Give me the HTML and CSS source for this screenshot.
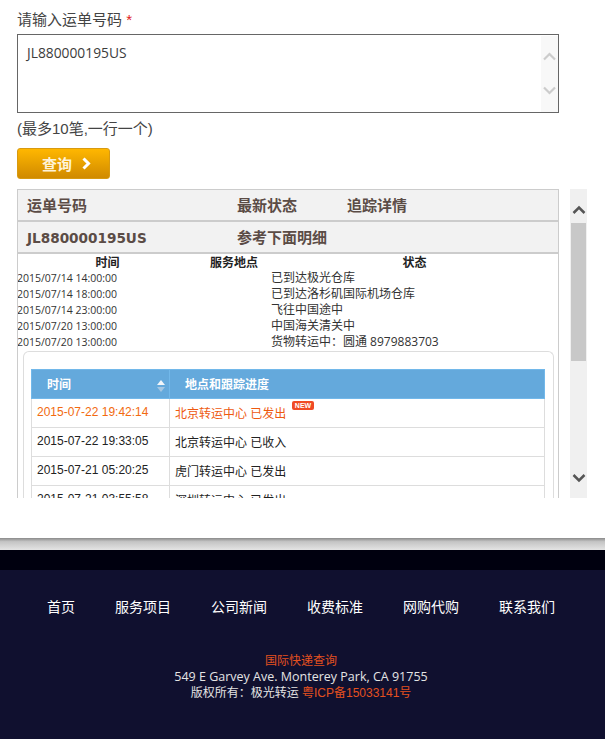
FILE: index.html
```html
<!DOCTYPE html>
<html lang="zh-CN">
<head>
<meta charset="utf-8">
<title>运单查询</title>
<link rel="stylesheet" href="styles.css">
</head>
<body>
<main class="main">
  <div class="field-label">请输入运单号码 <span class="req">*</span></div>
  <div class="input-box">
    <div class="input-text">JL880000195US</div>
    <div class="input-scroll">
      <svg class="chev-light" viewBox="0 0 13 10"><path d="M1 8.500 6.500 3 12 8.500"/></svg>
      <svg class="chev-light" viewBox="0 0 13 10"><path d="M1 1.500 6.500 7 12 1.500"/></svg>
    </div>
  </div>
  <div class="hint">(最多10笔,一行一个)</div>
  <button class="query-btn" type="button">查询
    <svg class="btn-chev" viewBox="0 0 9 13"><path d="M1.500 1.500 6.500 6.500 1.500 11.500"/></svg>
  </button>
  <div class="results">
    <section class="panel">
      <div class="bar bar-first">
        <div class="c1">运单号码</div><div class="c2">最新状态</div><div class="c3">追踪详情</div>
      </div>
      <div class="bar bar-second">
        <div class="c1 code">JL880000195US</div><div class="c2">参考下面明细</div>
      </div>
      <div class="log log-head"><div>时间</div><div>服务地点</div><div>状态</div></div>
      <div class="log"><div>2015/07/14 14:00:00</div><div></div><div>已到达极光仓库</div></div>
      <div class="log"><div>2015/07/14 18:00:00</div><div></div><div>已到达洛杉矶国际机场仓库</div></div>
      <div class="log"><div>2015/07/14 23:00:00</div><div></div><div>飞往中国途中</div></div>
      <div class="log"><div>2015/07/20 13:00:00</div><div></div><div>中国海关清关中</div></div>
      <div class="log"><div>2015/07/20 13:00:00</div><div></div><div>货物转运中：圆通 8979883703</div></div>
      <div class="card">
        <table class="track">
          <thead>
            <tr>
              <th class="th-time">时间
                <span class="sort"><i class="up"></i><i class="down"></i></span>
              </th>
              <th class="th-place">地点和跟踪进度</th>
            </tr>
          </thead>
          <tbody>
            <tr class="latest"><td>2015-07-22 19:42:14</td><td><span class="new-wrap">北京转运中心 已发出<span class="new">NEW</span></span></td></tr>
            <tr><td>2015-07-22 19:33:05</td><td>北京转运中心 已收入</td></tr>
            <tr><td>2015-07-21 05:20:25</td><td>虎门转运中心 已发出</td></tr>
            <tr><td>2015-07-21 03:55:58</td><td>深圳转运中心 已发出</td></tr>
          </tbody>
        </table>
      </div>
    </section>
    <div class="scrollbar">
      <svg class="chev-dark" viewBox="0 0 14 10"><path d="M1.500 8 7 2.500 12.500 8"/></svg>
      <div class="thumb"></div>
      <div class="track-space"></div>
      <svg class="chev-dark" viewBox="0 0 14 10"><path d="M1.500 2 7 7.500 12.500 2"/></svg>
    </div>
  </div>
</main>
<div class="shadow"></div>
<div class="black"></div>
<footer class="footer">
  <nav class="nav">
    <a>首页</a><a>服务项目</a><a>公司新闻</a><a>收费标准</a><a>网购代购</a><a>联系我们</a>
  </nav>
  <div class="info">
    <div class="accent">国际快递查询</div>
    <div class="addr">549 E Garvey Ave. Monterey Park, CA 91755</div>
    <div>版权所有：极光转运 <span class="accent">粤ICP备15033141号</span></div>
  </div>
</footer>
</body>
</html>
```
FILE: styles.css
```css
* { box-sizing: border-box; }
html, body { margin: 0; padding: 0; }
body {
  width: 605px;
  height: 739px;
  overflow: hidden;
  background: #fff;
  font-family: "Liberation Sans", "Noto Sans CJK SC", sans-serif;
  color: #333;
}
.main { height: 538px; padding: 11px 0 0 17px; background: #fff; }
.field-label { height: 23px; font-size: 15px; line-height: 18px; color: #444; }
.req { color: #e02020; }
.input-box {
  display: flex;
  width: 542px;
  height: 79px;
  border: 1px solid #666;
  background: #fff;
}
.input-text {
  flex: 1;
  padding: 9px 9px;
  font-family: "Open Sans", sans-serif;
  font-size: 13.800px;
  line-height: 18px;
  color: #3c3c3c;
}
.input-scroll {
  width: 17px;
  margin-top: 1px;
  padding: 15px 2px 0;
  background: #f8f8f8;
  display: flex;
  flex-direction: column;
  gap: 25px;
}
.chev-light { width: 13px; height: 10px; flex: none; fill: none; stroke: #ccc; stroke-width: 2.200; }
.hint { height: 35px; padding-top: 7px; font-size: 15px; line-height: 18px; color: #444; }
.query-btn {
  display: flex;
  align-items: center;
  width: 93px;
  height: 31px;
  padding: 0 0 0 24px;
  border: 1px solid #d89a10;
  border-radius: 3px;
  background: linear-gradient(#ffb700, #d08a00);
  color: #fff3d8;
  font-family: "Noto Sans CJK SC", sans-serif;
  font-size: 15px;
  font-weight: 700;
}
.btn-chev { width: 9px; height: 13px; margin-left: 10px; fill: none; stroke: #fff; stroke-width: 3; }
.results { display: flex; gap: 11px; margin-top: 10px; height: 309px; }
.panel {
  width: 542px;
  height: 309px;
  overflow: hidden;
  border: 1px solid #ccc;
  border-bottom: 0;
}
.bar {
  display: grid;
  grid-template-columns: 210px 110px 1fr;
  height: 32px;
  padding-left: 9px;
  align-items: center;
  background: #f2f2f2;
  border-bottom: 2px solid #ccc;
  font-family: "Noto Sans CJK SC", sans-serif;
  font-size: 15px;
  font-weight: 700;
  color: #5b4c46;
}
.bar-first { height: 32px; padding-bottom: 2px; }
.bar-second { padding-bottom: 1px; }
.code { padding-top: 3px; font-family: "DejaVu Sans", sans-serif; font-size: 13.600px; }
.log {
  display: grid;
  grid-template-columns: 181px 72px 1fr;
  height: 16px;
  margin-left: -1px;
  align-items: center;
  font-size: 12px;
  line-height: 16px;
  color: #333;
}
.log > div:first-child { font-family: "Open Sans", sans-serif; font-size: 10.500px; }
.log > div:last-child { padding: 1px 0 0 1px; font-family: "Open Sans", "Noto Sans CJK SC", sans-serif; }
.log-head { height: 15px; font-weight: 700; text-align: center; color: #222; font-family: "Noto Sans CJK SC", sans-serif; }
.log-head > div:first-child { font-family: inherit; font-size: 12px; }
.log-head > div:last-child { padding-top: 0; font-family: inherit; }
.card {
  width: 531px;
  height: 200px;
  margin: 2px 0 0 5px;
  padding: 17px 7px 0;
  border: 1px solid #ddd;
  border-bottom: 0;
  border-radius: 6px 6px 0 0;
}
.track { width: 514px; border-collapse: collapse; table-layout: fixed; font-size: 12px; }
.track th {
  height: 29px;
  padding-bottom: 2px;
  background: #64a9dc;
  border: 1px solid #72b8ea;
  color: #fff;
  font-family: "Noto Sans CJK SC", sans-serif;
  font-size: 12px;
  font-weight: 700;
  text-align: left;
}
.th-time { width: 138px; padding-left: 15px; position: relative; }
.th-place { padding-left: 15px; }
.sort { position: absolute; right: 4px; top: 10px; display: flex; flex-direction: column; gap: 2px; }
.up, .down { display: block; width: 0; height: 0; border-left: 4px solid transparent; border-right: 4px solid transparent; }
.up { border-bottom: 5px solid #f2f6fa; }
.down { border-top: 5px solid #a5c6e2; }
.track td {
  height: 29px;
  padding: 0 0 2px 5px;
  border: 1px solid #ddd;
  border-top: 0;
  color: #222;
  font-size: 12px;
  white-space: nowrap;
}
.latest td { color: #f26a10; }
.latest td:last-child { color: #ee5a10; }
.new-wrap { position: relative; display: inline-block; }
.new {
  position: absolute;
  left: 117px;
  top: -3px;
  width: 22px;
  height: 9px;
  background: #f04a24;
  border-radius: 2px;
  color: #fff;
  font-family: "Liberation Sans", sans-serif;
  font-size: 7px;
  font-weight: 700;
  line-height: 9px;
  text-align: center;
}
.scrollbar {
  display: flex;
  flex-direction: column;
  align-items: center;
  width: 17px;
  height: 309px;
  padding-top: 16px;
  background: #f0f0f0;
}
.chev-dark { width: 14px; height: 10px; flex: none; fill: none; stroke: #555; stroke-width: 2.500; }
.thumb { width: 15px; height: 138px; margin-top: 8px; flex: none; background: #c8c8c8; }
.track-space { height: 112px; flex: none; }
.shadow { height: 12px; background: linear-gradient(#8a8a8a, #c4c4c4 30%, #e4e4e4); }
.black { height: 20px; background: #00000f; }
.footer { height: 169px; background: #10102f; color: #e4e4e4; }
.nav {
  display: flex;
  gap: 40px;
  padding: 27px 0 0 47px;
  font-family: "Noto Sans CJK SC", sans-serif;
  font-size: 14px;
  font-weight: 400;
  line-height: 18px;
  color: #fff;
}
.info {
  margin-top: 38px;
  padding-right: 3px;
  text-align: center;
  font-size: 12px;
  line-height: 16px;
}
.addr { font-family: "Open Sans", sans-serif; font-size: 12.500px; }
.accent { color: #e4501f; }
```
